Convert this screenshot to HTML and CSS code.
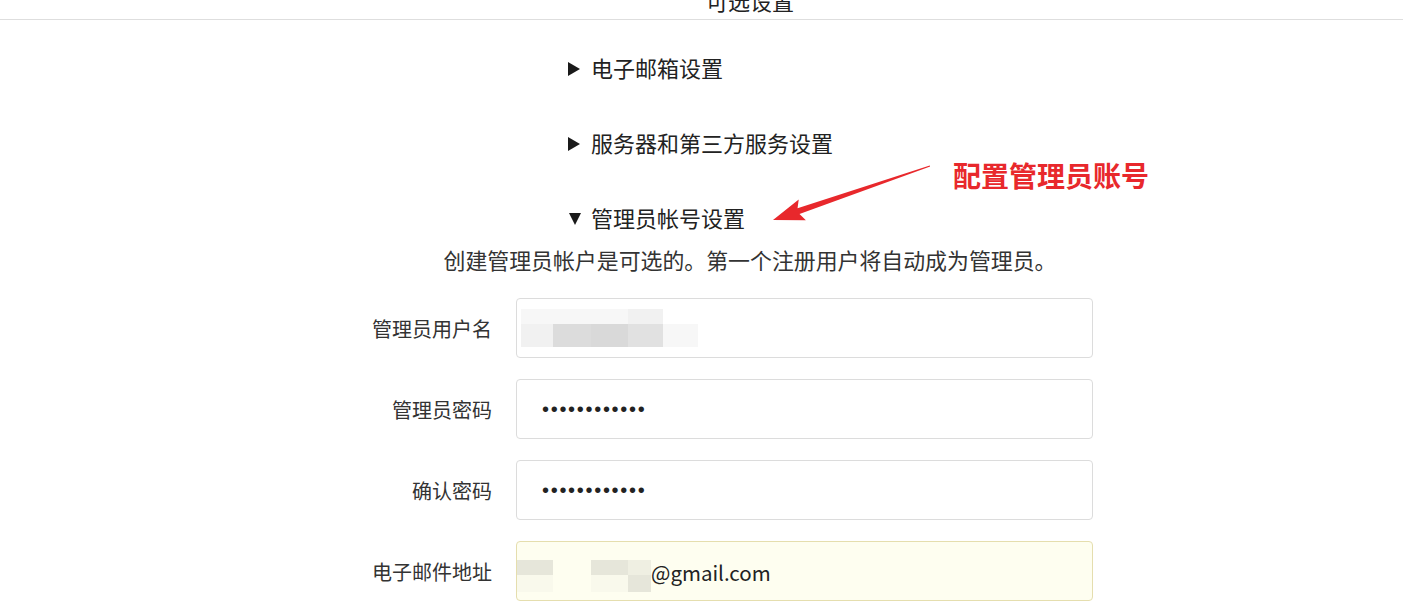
FILE: index.html
```html
<!DOCTYPE html>
<html>
<head>
	<meta charset="utf-8" />
	<title>安装 - 可选设置</title>
	<link rel="stylesheet" href="styles.css">
</head>
<body>
	<h4 class="sectionTitle"><span>可选设置</span></h4>

	<div class="content">
		<details class="group">
			<summary><i class="marker"></i>电子邮箱设置</summary>
		</details>

		<details class="group">
			<summary><i class="marker"></i>服务器和第三方服务设置</summary>
		</details>

		<details class="group" open>
			<summary><i class="marker"></i>管理员帐号设置</summary>
			<p class="hint">创建管理员帐户是可选的。第一个注册用户将自动成为管理员。</p>

			<div class="field">
				<label>管理员用户名</label>
				<div class="input">
					<div class="mosaic user">
						<b class="c1"></b><b class="c1"></b><b class="c1"></b><b class="c2"></b><b></b>
						<b class="c2"></b><b class="c4"></b><b class="c5"></b><b class="c3"></b><b class="c1"></b>
					</div>
				</div>
			</div>

			<div class="field">
				<label>管理员密码</label>
				<div class="input"><span class="dots">••••••••••••</span></div>
			</div>

			<div class="field">
				<label>确认密码</label>
				<div class="input"><span class="dots">••••••••••••</span></div>
			</div>

			<div class="field">
				<label>电子邮件地址</label>
				<div class="input autofill">
					<div class="mosaic mail">
						<b class="y2"></b><b></b><b class="y2"></b><b class="y1"></b>
						<b class="y0"></b><b></b><b class="y0"></b><b class="y2"></b>
					</div>
					<span class="mailText">@gmail.com</span>
				</div>
			</div>
		</details>
	</div>

	<!-- annotation -->
	<div class="callout">配置管理员账号</div>
	<svg class="arrow" width="1403" height="614" viewBox="0 0 1403 614">
		<polygon fill="#e8282c" transform="translate(773 220) rotate(-19)"
			points="0,0 31,-11 27,-3 166,-0.6 166,0.6 27,3 31,11" />
	</svg>
</body>
</html>
```

FILE: styles.css
```css
body {
	margin: 0;
	background: #fff;
	color: #222;
	font-family: "Noto Sans CJK SC", "Noto Sans", sans-serif;
}
.sectionTitle {
	display: flow-root;
	margin: 0;
	height: 19px;
	border-bottom: 1px solid #dedede;
	font-weight: normal;
}
.sectionTitle span {
	display: block;
	width: 820px;
	margin: -15px 0 0 340px;
	line-height: 30px;
	font-size: 22px;
	text-align: center;
}
.content {
	width: 820px;
	margin-left: 340px;
	padding-top: 32px;
}
.group {
	margin-bottom: 45px;
}
.group summary {
	display: flex;
	align-items: center;
	list-style: none;
	padding-left: 228px;
	line-height: 30px;
	font-size: 22px;
	cursor: pointer;
}
.group summary::-webkit-details-marker {
	display: none;
}
.marker {
	width: 23px;
	height: 14px;
	margin-top: 4px;
}
.marker::before {
	content: "";
	display: block;
	width: 0;
	height: 0;
	border-left: 12px solid #1a1a1a;
	border-top: 7px solid transparent;
	border-bottom: 7px solid transparent;
}
.group[open] .marker::before {
	margin-left: 1px;
	margin-top: 1px;
	border-top: 12px solid #1a1a1a;
	border-left: 6.5px solid transparent;
	border-right: 6.5px solid transparent;
	border-bottom: 0;
}
.hint {
	margin: 13px 0 0 0;
	line-height: 30px;
	font-size: 21.9px;
	text-align: center;
	color: #333;
}
.field {
	display: grid;
	grid-template-columns: 152px 577px;
	column-gap: 24px;
	align-items: center;
	margin-top: 21px;
}
.hint + .field {
	margin-top: 23px;
}
.field label {
	text-align: right;
	font-size: 20px;
	color: #333;
}
.input {
	box-sizing: border-box;
	height: 60px;
	padding: 0 24px;
	display: flex;
	align-items: center;
	border: 1px solid #dcdcdc;
	border-radius: 4px;
	font-size: 22px;
}
.autofill {
	background: #fefef0;
	border-color: #e5deae;
	padding-left: 0;
}
.mailText {
	font-size: 20.5px;
	margin-top: 2px;
}
.dots {
	font-family: "Liberation Sans", sans-serif;
	font-size: 20px;
	letter-spacing: 1.7px;
	margin-left: 1px;
}
.mosaic {
	display: grid;
}
.mosaic b {
	display: block;
}
.user {
	margin-left: -20px;
	grid-template-columns: 32px 38px 37px 35px 35px;
	grid-template-rows: 15px 23px;
}
.mail {
	margin-top: 9px;
	grid-template-columns: 36px 38px 37px 23px;
	grid-template-rows: 15px 17px;
}
.c1 { background: #f7f7f7; }
.c2 { background: #f1f1f1; }
.c3 { background: #e1e1e1; }
.c4 { background: #dcdcdc; }
.c5 { background: #d9d9d9; }
.y0 { background: #f9f9ec; }
.y1 { background: #efefe2; }
.y2 { background: #e6e6da; }
.callout {
	position: absolute;
	left: 953px;
	top: 157px;
	line-height: 36px;
	font-size: 28px;
	font-weight: bold;
	color: #e8282c;
}
.arrow {
	position: absolute;
	left: 0;
	top: 0;
	pointer-events: none;
}
```
